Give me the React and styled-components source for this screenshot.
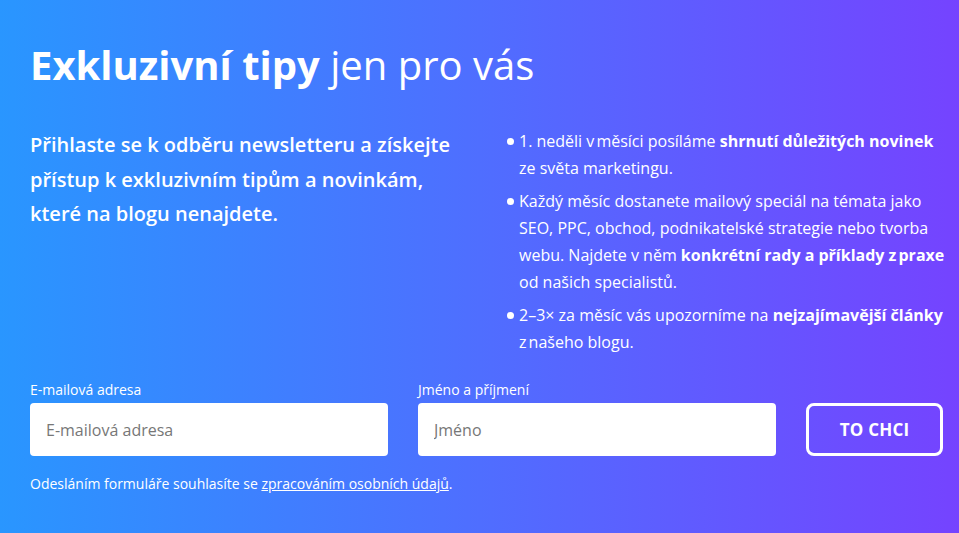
import React from "react";
import styled, { createGlobalStyle } from "styled-components";

const GlobalStyle = createGlobalStyle`
    html, body {
        margin: 0;
        padding: 0;
    }
    body {
        font-family: "Open Sans", "Noto Sans", sans-serif;
        color: #ffffff;
    }
`;

const Section = styled.section`
    width: 959px;
    height: 533px;
    box-sizing: border-box;
    padding: 38px 8px 0 30px;
    background: linear-gradient(90deg, #2996ff 0%, #4f6eff 50%, #7543ff 100%);
    overflow: hidden;
`;

const Heading = styled.h1`
    margin: 0;
    font-size: 40px;
    line-height: 54px;
    font-weight: 400;

    strong {
        font-weight: 700;
    }
`;

const Columns = styled.div`
    display: grid;
    grid-template-columns: 445px 1fr;
    gap: 30px;
    margin-top: 30px;
`;

const Lead = styled.p`
    margin: 6px 0 0;
    max-width: 428px;
    font-size: 20px;
    line-height: 34.5px;
    font-weight: 600;
`;

const List = styled.ul`
    margin: 0;
    padding: 6px 0 0;
    list-style: none;
`;

const Item = styled.li`
    position: relative;
    padding-left: 14px;
    font-size: 16px;
    line-height: 27px;
    margin-bottom: 6px;

    &::before {
        content: "";
        position: absolute;
        left: 2px;
        top: 10px;
        width: 7px;
        height: 7px;
        border-radius: 50%;
        background: #ffffff;
    }

    strong {
        font-weight: 700;
    }
`;

const Form = styled.form`
    display: grid;
    grid-template-columns: 358px 358px 137px;
    column-gap: 30px;
    align-items: end;
    margin-top: 19px;
`;

const Field = styled.label`
    display: flex;
    flex-direction: column;
    gap: 4px;
    font-size: 14px;
    line-height: 18px;
`;

const Input = styled.input`
    height: 53px;
    box-sizing: border-box;
    border: none;
    border-radius: 4px;
    padding: 0 16px;
    font-family: inherit;
    font-size: 16px;
    color: #333333;
    background: #ffffff;
    outline: none;

    &::placeholder {
        color: #777777;
    }
`;

const Submit = styled.button`
    height: 53px;
    box-sizing: border-box;
    border: 3px solid #ffffff;
    border-radius: 8px;
    background: transparent;
    color: #ffffff;
    font-family: inherit;
    font-size: 17px;
    font-weight: 700;
    letter-spacing: 0.2px;
    cursor: pointer;
`;

const Consent = styled.p`
    margin: 18px 0 0;
    font-size: 14px;
    line-height: 20px;

    a {
        color: inherit;
        text-decoration: underline;
    }
`;

export default function App() {
    return (
        <>
            <GlobalStyle />
            <Section>
                <Heading>
                    <strong>Exkluzivní tipy</strong> jen pro vás
                </Heading>
                <Columns>
                    <Lead>
                        Přihlaste se k odběru newsletteru a získejte přístup
                        k exkluzivním tipům a novinkám, které na blogu
                        nenajdete.
                    </Lead>
                    <List>
                        <Item>
                            1. neděli v{"\u202F"}měsíci posíláme{" "}
                            <strong>shrnutí důležitých novinek</strong> ze
                            světa marketingu.
                        </Item>
                        <Item>
                            Každý měsíc dostanete mailový speciál na témata jako
                            SEO, PPC, obchod, podnikatelské strategie nebo
                            tvorba webu. Najdete v něm{" "}
                            <strong>
                                konkrétní rady a příklady z{"\u202F"}praxe
                            </strong>{" "}
                            od našich specialistů.
                        </Item>
                        <Item>
                            2–3× za měsíc vás upozorníme na{" "}
                            <strong>nejzajímavější články</strong> z
                            {"\u202F"}našeho blogu.
                        </Item>
                    </List>
                </Columns>
                <Form onSubmit={(e) => e.preventDefault()}>
                    <Field>
                        E-mailová adresa
                        <Input type="email" placeholder="E-mailová adresa" />
                    </Field>
                    <Field>
                        Jméno a příjmení
                        <Input type="text" placeholder="Jméno" />
                    </Field>
                    <Submit type="submit">TO CHCI</Submit>
                </Form>
                <Consent>
                    Odesláním formuláře souhlasíte se{" "}
                    <a href="#">zpracováním osobních údajů</a>.
                </Consent>
            </Section>
        </>
    );
}
